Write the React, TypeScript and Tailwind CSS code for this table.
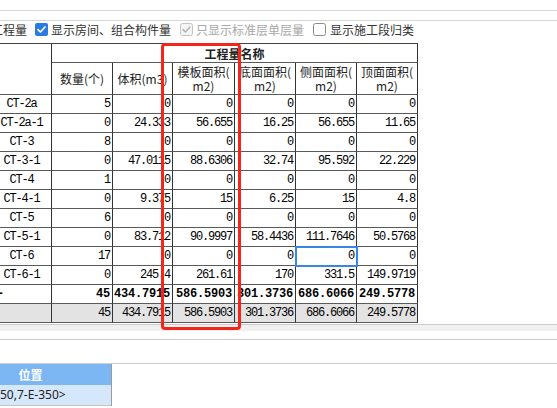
import React from "react";

const rows: string[][] = [
  ["CT-2a", "5", "0", "0", "0", "0", "0"],
  ["CT-2a-1", "0", "24.333", "56.655", "16.25", "56.655", "11.65"],
  ["CT-3", "8", "0", "0", "0", "0", "0"],
  ["CT-3-1", "0", "47.0115", "88.6306", "32.74", "95.592", "22.229"],
  ["CT-4", "1", "0", "0", "0", "0", "0"],
  ["CT-4-1", "0", "9.375", "15", "6.25", "15", "4.8"],
  ["CT-5", "6", "0", "0", "0", "0", "0"],
  ["CT-5-1", "0", "83.712", "90.9997", "58.4436", "111.7646", "50.5768"],
  ["CT-6", "17", "0", "0", "0", "0", "0"],
  ["CT-6-1", "0", "245.4", "261.61", "170", "331.5", "149.9719"],
];

const totals = ["45", "434.7915", "586.5903", "301.3736", "686.6066", "249.5778"];

const cell = "border-r border-b border-r-[#333] border-b-[#5a5a5a] overflow-hidden";
const mono = "font-['Liberation_Mono',monospace] text-[12px] text-black";

function CheckedBlue() {
  return (
    <svg width="13" height="13" viewBox="0 0 13 13" className="shrink-0">
      <rect x="0" y="0" width="13" height="13" rx="2" fill="#2a7be0" />
      <path d="M3 6.6 L5.4 9 L10 4" fill="none" stroke="#fff" strokeWidth="1.7" strokeLinecap="round" strokeLinejoin="round" />
    </svg>
  );
}

function CheckedGray() {
  return (
    <svg width="13" height="13" viewBox="0 0 13 13" className="shrink-0">
      <rect x="0.5" y="0.5" width="12" height="12" rx="2" fill="#f4f4f4" stroke="#c4c4c4" />
      <path d="M3 6.6 L5.4 9 L10 4" fill="none" stroke="#b4b4b4" strokeWidth="1.5" strokeLinecap="round" strokeLinejoin="round" />
    </svg>
  );
}

function Unchecked() {
  return (
    <svg width="13" height="13" viewBox="0 0 13 13" className="shrink-0">
      <rect x="0.5" y="0.5" width="12" height="12" rx="2" fill="#fff" stroke="#8a8a8a" />
    </svg>
  );
}

export default function App() {
  return (
    <div className="relative h-[408px] w-[557px] overflow-hidden bg-white font-['Noto_Sans_CJK_SC',sans-serif]">
      {/* top lines */}
      <div className="h-[10px]" />
      <div className="h-px bg-[#d6d6d6]" />
      <div className="h-[9px]" />
      <div className="h-px bg-[#d6d6d6]" />
      {/* checkbox row */}
      <div className="h-[22px] pt-px">
        <div className="flex h-[15px] items-center whitespace-nowrap text-[12px] leading-[15px] text-[#333]">
          <span className="ml-[-9px]">工程量</span>
          <span className="ml-[8px] flex items-center"><CheckedBlue /></span>
          <span className="ml-[3px]">显示房间、组合构件量</span>
          <span className="ml-[9px] flex items-center"><CheckedGray /></span>
          <span className="ml-[3px] text-[#a8a8a8]">只显示标准层单层量</span>
          <span className="ml-[9px] flex items-center"><Unchecked /></span>
          <span className="ml-[4px]">显示施工段归类</span>
        </div>
      </div>

      {/* table */}
      <div className="ml-[-8px] grid w-[426px] grid-cols-[60px_61px_60px_62px_61px_61px_61px] grid-rows-[19px_32px_repeat(12,19px)] border-t border-t-[#444] text-[12px] text-[#222]">
        <div className={`${cell} row-span-2`} />
        <div className={`${cell} col-span-6 flex items-center justify-center font-bold leading-[15px]`}>工程量名称</div>
        <div className={`${cell} flex items-center justify-center leading-[15px] whitespace-nowrap`}>数量(个)</div>
        <div className={`${cell} flex items-center justify-center leading-[15px] whitespace-nowrap`}>体积(m3)</div>
        {["模板面积", "底面面积", "侧面面积", "顶面面积"].map((h) => (
          <div key={h} className={`${cell} flex flex-col items-center justify-center leading-[14px] whitespace-nowrap`}>
            <span>{h}(</span>
            <span>m2)</span>
          </div>
        ))}

        {rows.map((r, ri) => (
          <React.Fragment key={ri}>
            <div className={`${cell} ${mono} flex items-center justify-center tracking-[-1.2px] whitespace-nowrap`}>{r[0]}</div>
            {r.slice(1).map((v, ci) => {
              const selected = ri === 8 && ci === 4;
              return (
                <div
                  key={ci}
                  className={`${cell} ${mono} flex items-center justify-end pr-[2px] tracking-[-1.2px] whitespace-nowrap ${selected ? "relative z-10 outline-2 -outline-offset-1 outline-[#3a86e6] outline-solid" : ""}`}
                >
                  {v}
                </div>
              );
            })}
          </React.Fragment>
        ))}

        {/* bold total row */}
        <div className={`${cell} ${mono} flex items-center pl-[5px] font-bold`}>-</div>
        {totals.map((v, i) => (
          <div key={i} className={`${cell} ${mono} flex items-center justify-end pr-[2px] font-bold tracking-[-0.2px] whitespace-nowrap`}>{v}</div>
        ))}

        {/* gray row */}
        <div className={`${cell} bg-[#e3e3e3]`} />
        {totals.map((v, i) => (
          <div key={i} className={`${cell} ${mono} flex items-center justify-end bg-[#e3e3e3] pr-[2px] tracking-[-1.2px] whitespace-nowrap`}>{v}</div>
        ))}
      </div>

      {/* below table */}
      <div className="h-px" />
      <div className="h-px bg-[#cdcdcd]" />
      <div className="h-[6px] bg-[#f0f0f0]" />
      <div className="h-[8px]" />
      <div className="h-px bg-[#cdcdcd]" />
      <div className="h-[23px]" />
      <div className="h-px bg-[#cdcdcd]" />
      <div className="flex">
        <div className="ml-[-50px] w-[162px] border-r border-r-[#9a9a9a]">
          <div className="flex h-[21px] items-center justify-center bg-[#7db7f3] text-[12px] font-bold text-white">位置</div>
          <div className="flex h-[21px] items-center border-b border-b-[#c4c4c4] bg-[#d5e7fb] pl-[50px] font-['Noto_Sans',sans-serif] text-[12px] text-[#222] whitespace-nowrap">
            50,7-E-350&gt;
          </div>
        </div>
      </div>

      {/* red highlight overlay */}
      <div className="pointer-events-none absolute left-[161px] top-[43px] h-[287px] w-[80px] rounded-[4px] border-[3px] border-[#f3261b]" />
    </div>
  );
}
